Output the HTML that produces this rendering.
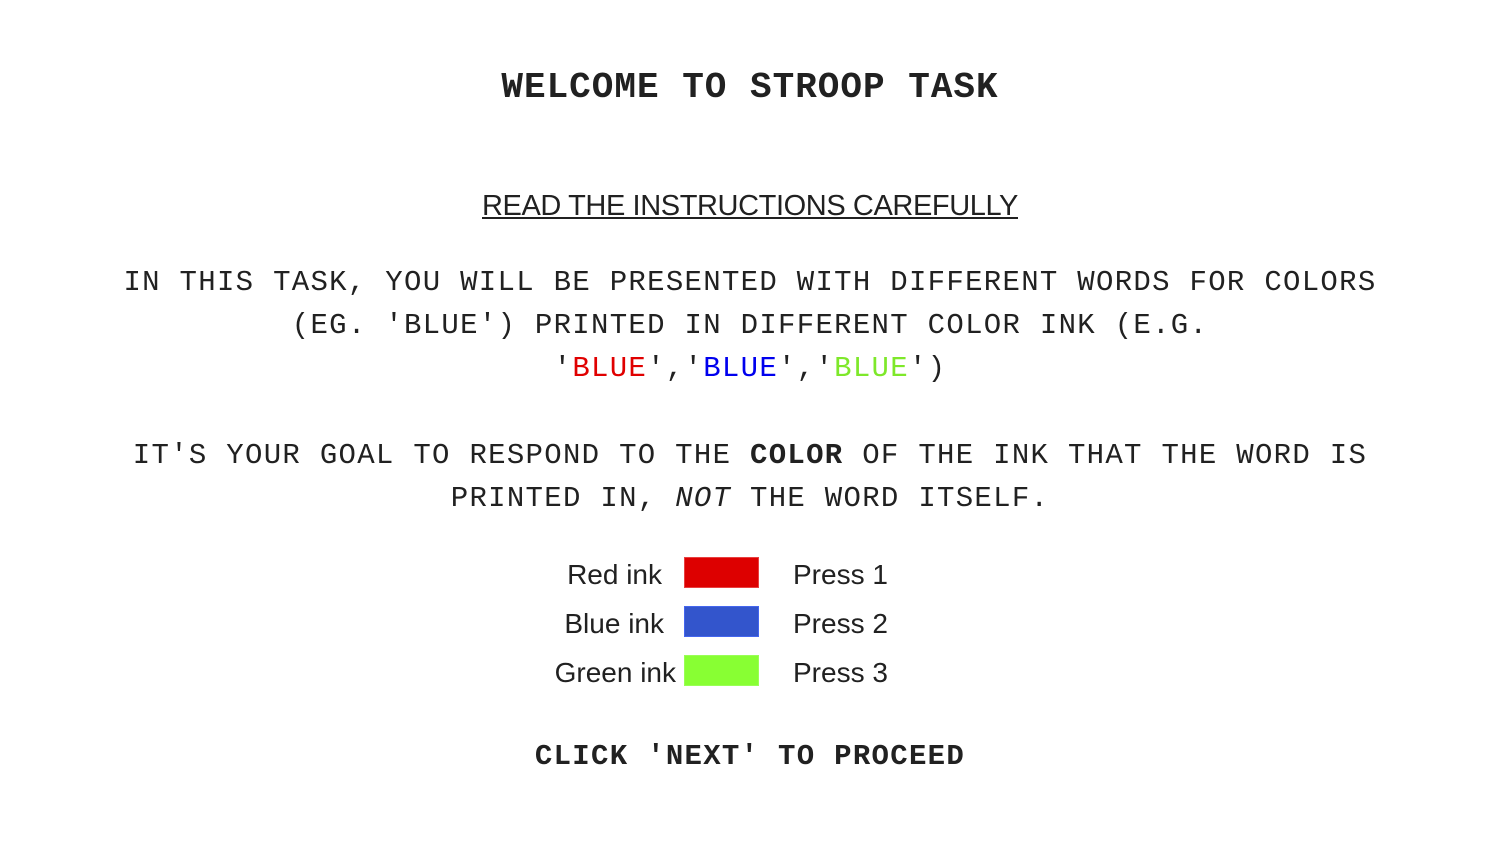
<!DOCTYPE html>
<html><head><style>
body{margin:0;width:1500px;height:844px;background:#fff;color:#212121;position:relative;overflow:hidden}
.m{font-family:"Liberation Mono",monospace;position:absolute;left:0;width:1500px;text-align:center;white-space:nowrap}
.p{font-size:29px;letter-spacing:1.3px;line-height:43px}
.s{font-family:"Liberation Sans",sans-serif;position:absolute;font-size:28px;white-space:nowrap}
.sw{position:absolute;left:684px;width:75px;height:31px;box-sizing:border-box}
</style></head><body>
<div class="m" style="top:65px;font-size:36px;font-weight:bold;letter-spacing:1px;line-height:46px">WELCOME TO STROOP TASK</div>
<div class="s" style="top:190px;left:0;width:1500px;text-align:center;text-decoration:underline;font-size:29px;letter-spacing:-0.4px">READ THE INSTRUCTIONS CAREFULLY</div>
<div class="m p" style="top:261px">IN THIS TASK, YOU WILL BE PRESENTED WITH DIFFERENT WORDS FOR COLORS</div>
<div class="m p" style="top:304px">(EG. 'BLUE') PRINTED IN DIFFERENT COLOR INK (E.G.</div>
<div class="m p" style="top:347px">'<span style="color:#e00000">BLUE</span>','<span style="color:#0000ee">BLUE</span>','<span style="color:#7ee82a">BLUE</span>')</div>
<div class="m p" style="top:434px">IT'S YOUR GOAL TO RESPOND TO THE <b>COLOR</b> OF THE INK THAT THE WORD IS</div>
<div class="m p" style="top:477px">PRINTED IN, <i>NOT</i> THE WORD ITSELF.</div>
<div class="s" style="top:559px;right:838px">Red ink</div>
<div class="s" style="top:608px;right:836px">Blue ink</div>
<div class="s" style="top:657px;right:824px">Green ink</div>
<div class="sw" style="top:557px;background:#dd0000;border:1px solid #e84040"></div>
<div class="sw" style="top:606px;background:#3355cc;border:1px solid #4466ee"></div>
<div class="sw" style="top:655px;background:#88ff33;border:1px solid #99ff55"></div>
<div class="s" style="top:559px;left:793px">Press 1</div>
<div class="s" style="top:608px;left:793px">Press 2</div>
<div class="s" style="top:657px;left:793px">Press 3</div>
<div class="m p" style="top:735px;font-weight:bold">CLICK 'NEXT' TO PROCEED</div>
</body></html>
